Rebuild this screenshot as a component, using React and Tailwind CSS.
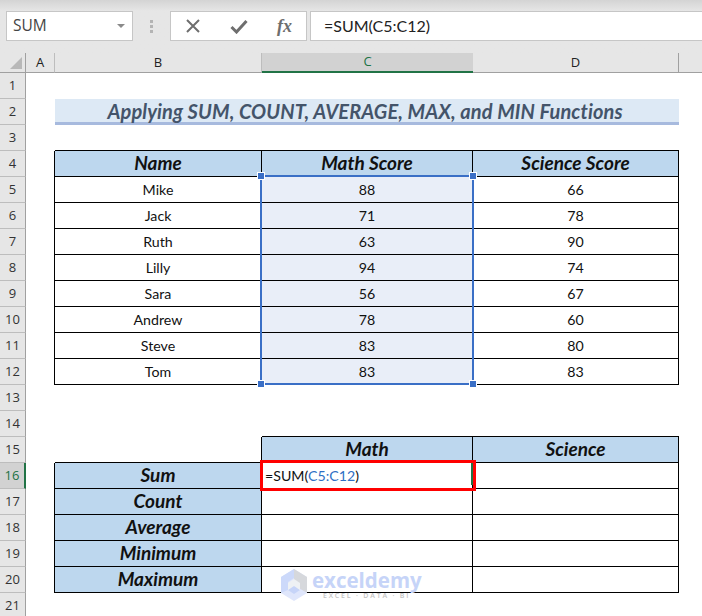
import React from "react";

const scores = [
  ["Mike", 88, 66],
  ["Jack", 71, 78],
  ["Ruth", 63, 90],
  ["Lilly", 94, 74],
  ["Sara", 56, 67],
  ["Andrew", 78, 60],
  ["Steve", 83, 80],
  ["Tom", 83, 83],
];

const labels = ["Sum", "Count", "Average", "Minimum", "Maximum"];

const cellFont = "font-['Lato','Carlito',sans-serif] text-[14.2px] text-[#111]";
const headFont = "font-['Lato','Carlito',sans-serif] text-[19px] font-bold italic text-[#111]";
const center = "flex items-center justify-center";

function RowHead({ n, active }) {
  return (
    <div
      className={
        active
          ? "w-[26px] h-full shrink-0 flex items-center justify-center bg-[#d2d2d2] border-r-2 border-b border-r-[#217346] border-b-[#bdbdbd] text-[#217346] text-[13px]"
          : "w-[26px] h-full shrink-0 flex items-center justify-center bg-[#e6e6e6] border-r border-b border-r-[#a0a0a0] border-b-[#bdbdbd] text-[#333] text-[13px]"
      }
    >
      {n}
    </div>
  );
}

// one sheet row: row header, column A, B, C, D and what is left of the sheet
function Row({ n, active, a = "", b = "", c = "", d = "", children }) {
  const [bText, cText, dText] = children || [];
  return (
    <div className="flex h-[26px]">
      <RowHead n={n} active={active} />
      <div className={`w-[29px] shrink-0 ${a}`} />
      <div className={`w-[207px] shrink-0 ${center} ${b}`}>{bText}</div>
      <div className={`w-[211px] shrink-0 ${center} ${c}`}>{cText}</div>
      <div className={`w-[206px] shrink-0 ${center} ${d}`}>{dText}</div>
    </div>
  );
}

function Logo() {
  return (
    <svg width="28" height="32" viewBox="0 0 28 32">
      <polygon points="14,0 27,8 27,24 14,32 1,24 1,8" fill="#dfe6fb" />
      <polygon points="14,0 27,8 27,24 14,16" fill="#d6d8dc" />
      <polygon points="1,8 14,0 14,9 8,13 8,21 1,24" fill="#ccd9fa" />
      <polygon points="8,21 14,16 20,21 14,25" fill="#c6d4f8" />
      <polygon points="14,10 20,14 20,21 14,17 8,21 8,14" fill="#eef1f4" />
    </svg>
  );
}

export default function App() {
  return (
    <div className="w-[702px] h-[616px] overflow-hidden bg-white font-['Open_Sans',sans-serif]">
      {/* ribbon edge and formula bar */}
      <div className="h-[53px] bg-[#e6e6e6] bg-gradient-to-b from-[#d4d4d4] to-[#e6e6e6] to-[11px] pt-[11px] flex items-start">
        <div className="ml-[6px] w-[127px] h-[30px] bg-white border border-[#c6c6c6] flex items-center justify-between pl-[6px] pr-[7px]">
          <span className="text-[15.5px] text-[#444]">SUM</span>
          <span className="w-0 h-0 border-x-[4px] border-x-transparent border-t-[4px] border-t-[#8a8a8a]" />
        </div>
        <div className="w-[37px] h-[30px] flex flex-col items-center justify-center gap-[2px]">
          <span className="w-[3px] h-[3px] bg-[#b4b4b4]" />
          <span className="w-[3px] h-[3px] bg-[#b4b4b4]" />
          <span className="w-[3px] h-[3px] bg-[#b4b4b4]" />
        </div>
        <div className="w-[137px] h-[30px] bg-white border border-[#c6c6c6] flex items-center">
          <svg width="14" height="14" viewBox="0 0 14 14" className="ml-[15px]">
            <path d="M1 1 L13 13 M13 1 L1 13" stroke="#6e6e6e" strokeWidth="2" fill="none" />
          </svg>
          <svg width="18" height="15" viewBox="0 0 18 15" className="ml-[30px]">
            <path d="M1.5 8 L6.5 13 L16.5 2" stroke="#6e6e6e" strokeWidth="3" fill="none" />
          </svg>
          <span className="ml-[29px] text-[#6e6e6e] text-[18px] italic font-['Liberation_Serif',serif] font-bold leading-none">
            fx
          </span>
        </div>
        <div className="ml-[3px] flex-1 h-[30px] bg-white border-y border-l border-[#c6c6c6] flex items-center pl-[13px]">
          <span className="font-['Lato','Carlito',sans-serif] text-[16px] text-[#222]">=SUM(C5:C12)</span>
        </div>
      </div>

      {/* column headers */}
      <div className="flex h-[20px] text-[13px] text-[#222]">
        <div className="w-[26px] shrink-0 bg-[#e6e6e6] border-r border-b border-[#a0a0a0] flex items-end justify-end pr-[3px] pb-[3px]">
          <span className="w-0 h-0 border-l-[12px] border-l-transparent border-b-[12px] border-b-[#b8b8b8]" />
        </div>
        <div className={`w-[29px] shrink-0 bg-[#e6e6e6] border-r border-b border-r-[#bdbdbd] border-b-[#a0a0a0] ${center}`}>A</div>
        <div className={`w-[207px] shrink-0 bg-[#e6e6e6] border-r border-b border-r-[#bdbdbd] border-b-[#a0a0a0] ${center}`}>B</div>
        <div className={`w-[211px] shrink-0 bg-[#d2d2d2] border-b-2 border-b-[#217346] text-[#217346] ${center}`}>C</div>
        <div className={`w-[206px] shrink-0 bg-[#e6e6e6] border-r border-b border-r-[#a0a0a0] border-b-[#a0a0a0] ${center}`}>D</div>
        <div className="flex-1 bg-[#e6e6e6] border-b border-[#a0a0a0]" />
      </div>

      <div className="relative">
        <Row n={1} />
        <div className="flex h-[26px]">
          <RowHead n={2} />
          <div className="w-[29px] shrink-0" />
          <div className={`w-[624px] shrink-0 pr-[4px] bg-[#dde9f5] border-b-[3px] border-[#a7bade] ${center}`}>
            <span className="font-['Lato','Carlito',sans-serif] text-[20px] tracking-[0.1px] font-bold italic text-[#44546a] leading-none">
              Applying SUM, COUNT, AVERAGE, MAX, and MIN Functions
            </span>
          </div>
        </div>
        <Row
          n={3}
          b="border-b border-black"
          c="border-b border-black"
          d="border-b border-black"
        />
        <Row
          n={4}
          a="border-r border-black"
          b={`bg-[#bdd7ee] border-r border-b border-black ${headFont}`}
          c={`bg-[#bdd7ee] border-r border-b border-black ${headFont}`}
          d={`bg-[#bdd7ee] border-r border-b border-black ${headFont}`}
        >
          {["Name", "Math Score", "Science Score"]}
        </Row>
        {scores.map(([name, math, science], i) => (
          <Row
            key={name}
            n={i + 5}
            a="border-r border-black"
            b={`border-r border-b border-black ${cellFont}`}
            c={`bg-[#e9eef8] border-r border-b border-black ${cellFont}`}
            d={`border-r border-b border-black ${cellFont}`}
          >
            {[name, math, science]}
          </Row>
        ))}
        <Row n={13} />
        <Row n={14} c="border-b border-black" d="border-b border-black" />
        <Row
          n={15}
          b="border-r border-b border-black"
          c={`bg-[#bdd7ee] border-r border-b border-black ${headFont}`}
          d={`bg-[#bdd7ee] border-r border-b border-black ${headFont}`}
        >
          {["", "Math", "Science"]}
        </Row>
        {labels.map((label, i) => (
          <Row
            key={label}
            n={i + 16}
            active={i === 0}
            a="border-r border-black"
            b={`bg-[#bdd7ee] border-r border-b border-black ${headFont}`}
            c={`border-r border-b border-black ${cellFont}`}
            d="border-r border-b border-black"
          >
            {[
              label,
              i === 0 ? (
                <span className="w-full pl-[3px]">
                  =SUM(<span className="text-[#2f6fc4]">C5:C12</span>)
                </span>
              ) : (
                ""
              ),
              "",
            ]}
          </Row>
        ))}
        <Row n={21} />

        {/* selection of C5:C12 */}
        <div className="absolute left-[260px] top-[102px] w-[214px] h-[210px] border-2 border-[#3a6fc6] pointer-events-none">
          <span className="absolute -left-[4px] -top-[4px] w-[6px] h-[6px] bg-[#3a6fc6] outline outline-1 outline-white" />
          <span className="absolute -right-[4px] -top-[4px] w-[6px] h-[6px] bg-[#3a6fc6] outline outline-1 outline-white" />
          <span className="absolute -left-[4px] -bottom-[4px] w-[6px] h-[6px] bg-[#3a6fc6] outline outline-1 outline-white" />
          <span className="absolute -right-[4px] -bottom-[4px] w-[6px] h-[6px] bg-[#3a6fc6] outline outline-1 outline-white" />
        </div>

        {/* active cell C16 */}
        <div className="absolute left-[260px] top-[387px] w-[216px] h-[31px] border-[3px] border-[#ff0000] pointer-events-none">
          <span className="absolute right-0 top-0 bottom-[3px] w-[2px] bg-[#217346]" />
        </div>

        {/* watermark */}
        <div className="absolute left-[280px] top-[496px] flex items-start gap-[4px] pointer-events-none">
          <Logo />
          <div className="flex flex-col items-start">
            <span className="font-['Open_Sans',sans-serif] font-bold text-[20.5px] leading-[20px] pt-[1px] text-[#c6d4f8]">
              exceldemy
            </span>
            <span className="ml-[11px] mt-[2px] text-[7px] leading-[8px] tracking-[1.8px] font-semibold text-[#c4c4c4]">
              EXCEL · DATA · BI
            </span>
          </div>
        </div>
      </div>
    </div>
  );
}
